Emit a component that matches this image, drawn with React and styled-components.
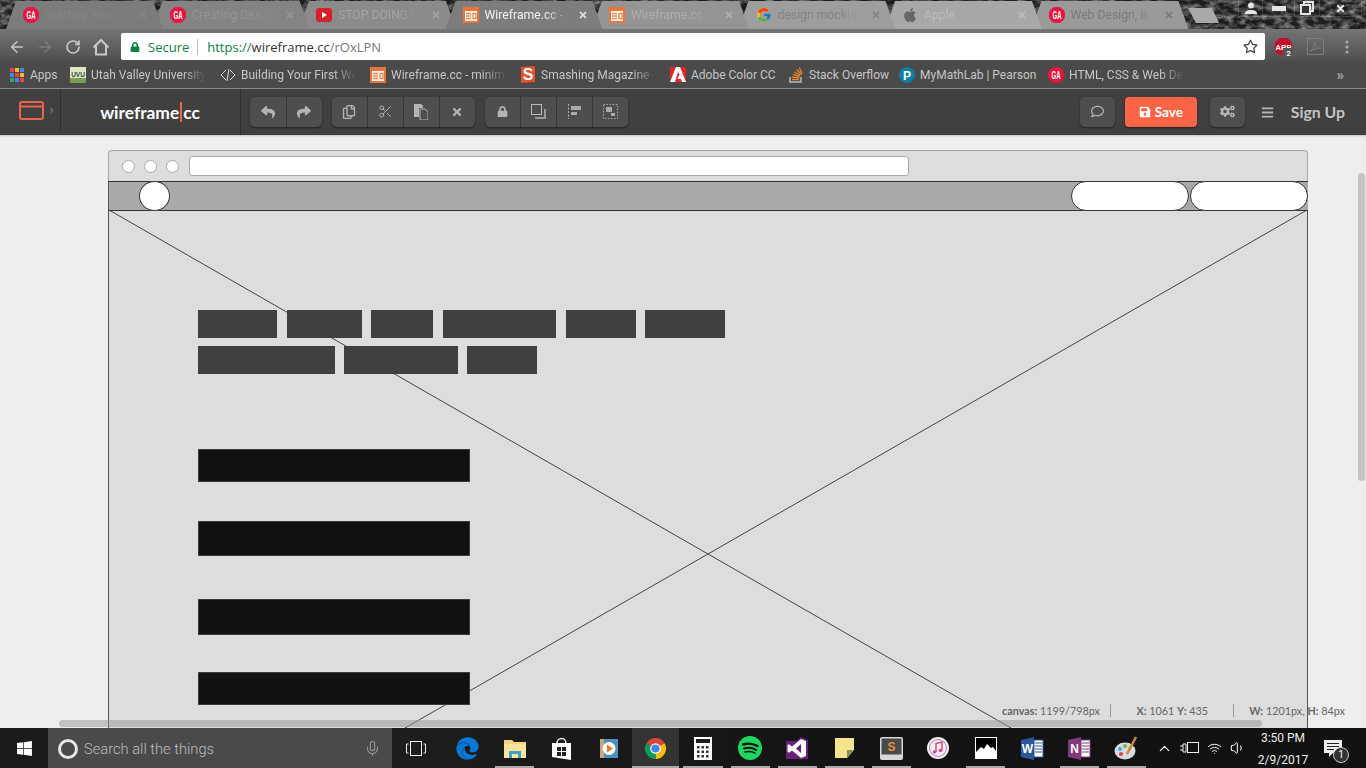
import React from "react";
import styled, { createGlobalStyle } from "styled-components";
import {
  FaApple, FaReply, FaShare, FaRegCopy, FaTimes, FaLock, FaRegComment,
  FaSave, FaCogs, FaBars, FaRegStar, FaEdge, FaWindows, FaCaretRight,
} from "react-icons/fa";
import { FcGoogle } from "react-icons/fc";
import { ArrowLeft, ArrowRight, RotateCw, Mic, ChevronUp, Wifi, Volume1, Scissors } from "lucide-react";

const uiFont = `Roboto, "Open Sans", sans-serif`;
const appFont = `Lato, "Open Sans", sans-serif`;

const GlobalStyle = createGlobalStyle`
  html, body { margin: 0; padding: 0; height: 100%; overflow: hidden; background: #eee; }
  * { box-sizing: border-box; }
`;

const Screen = styled.div`
  width: 1366px;
  height: 768px;
  display: flex;
  flex-direction: column;
  overflow: hidden;
  font-family: ${uiFont};
`;

/* --- browser tabs --- */
const TabStrip = styled.div`
  position: relative;
  height: 29px;
  flex: none;
  background: #1c1c1c;
  display: flex;
  padding: 1px 0 0 6px;
  overflow: hidden;
`;
const Noise = styled.svg`
  position: absolute;
  inset: 0;
  width: 100%;
  height: 100%;
`;
const Tab = styled.div`
  position: relative;
  z-index: ${({ $active, $z }) => ($active ? 20 : $z)};
  flex: none;
  width: 157px;
  height: 28px;
  margin-right: -10.5px;
  padding: 0 0 0 17px;
  display: flex;
  align-items: center;
  gap: 6px;
  background: ${({ $bg }) => $bg};
  clip-path: polygon(10px 0, 147px 0, 157px 100%, 0 100%);
  color: ${({ $text }) => $text};
  font-size: 12.2px;
  &:first-child { padding-left: 15px; }
`;
const TabIcon = styled.span`
  flex: none;
  width: 16px;
  height: 16px;
  display: flex;
  align-items: center;
  justify-content: center;
`;
const TabLabel = styled.span`
  width: 84px;
  white-space: nowrap;
  overflow: hidden;
  -webkit-mask-image: linear-gradient(to right, #000 70%, transparent);
  mask-image: linear-gradient(to right, #000 70%, transparent);
`;
const TabClose = styled.span`
  display: flex;
  color: ${({ $active }) => ($active ? "#ddd" : "inherit")};
  margin-left: 3px;
`;
const NewTab = styled.div`
  position: relative;
  z-index: 1;
  flex: none;
  width: 31px;
  height: 15px;
  margin: 7px 0 0 10px;
  background: #aaa;
  clip-path: polygon(0 0, 24px 0, 100% 100%, 8px 100%);
`;
const WindowControls = styled.div`
  position: absolute;
  z-index: 30;
  top: 0;
  right: 4px;
  height: 17px;
  display: flex;
  color: #e4e4e4;
  border: 1px solid rgba(255, 255, 255, 0.14);
  border-top: 0;
`;
const WindowButton = styled.div`
  width: ${({ $w }) => $w}px;
  display: flex;
  align-items: center;
  justify-content: center;
  border-left: ${({ $first }) => ($first ? "0" : "1px solid rgba(255,255,255,.14)")};
`;

/* --- chrome toolbar --- */
const Toolbar = styled.div`
  height: 33px;
  flex: none;
  display: flex;
  align-items: center;
  padding: 2px 0 0 3px;
  background: linear-gradient(#757575, #4e4e4e);
  color: #c8c8c8;
`;
const NavButton = styled.div`
  width: 28px;
  display: flex;
  justify-content: center;
  opacity: ${({ $dim }) => ($dim ? 0.25 : 1)};
`;
const Omnibox = styled.div`
  width: 1144px;
  height: 27px;
  margin-left: 6px;
  background: #fff;
  border-radius: 2px;
  display: flex;
  align-items: center;
  padding: 0 6px 0 9px;
  font-family: "Open Sans", sans-serif;
  font-size: 13px;
`;
const Secure = styled.span`
  color: #0b8043;
  display: flex;
  align-items: center;
  gap: 8px;
  padding-right: 8px;
  border-right: 1px solid #bbb;
  height: 16px;
  line-height: 16px;
`;
const UrlText = styled.span`
  color: ${({ $c }) => $c};
  margin-left: ${({ $first }) => ($first ? "9px" : "0")};
`;
const Star = styled.span`
  margin-left: auto;
  display: flex;
  color: #444;
  padding-right: 1px;
`;
const Extension = styled.div`
  position: relative;
  width: 32px;
  display: flex;
  justify-content: center;
  margin-left: ${({ $ml }) => $ml || 0}px;
`;
const Badge = styled.span`
  position: absolute;
  top: 11px;
  left: 16px;
  width: 11px;
  height: 11px;
  background: #555;
  color: #eee;
  font-size: 8px;
  font-weight: 700;
  line-height: 11px;
  text-align: center;
`;

/* --- bookmarks --- */
const Bookmarks = styled.div`
  height: 27px;
  flex: none;
  display: flex;
  align-items: center;
  background: #4a4a4a;
  padding: 0 0 1px 9px;
  font-size: 12px;
  color: #c6c6c6;
  border-bottom: 1px solid #8a8a8a;
`;
const Bookmark = styled.div`
  flex: none;
  width: ${({ $w }) => $w}px;
  display: flex;
  align-items: center;
  gap: 5px;
`;
const BookmarkIcon = styled.span`
  flex: none;
  width: 16px;
  height: 16px;
  display: flex;
  align-items: center;
  justify-content: center;
`;
const BookmarkLabel = styled.span`
  white-space: nowrap;
  overflow: hidden;
  flex: 1;
  margin-right: ${({ $fade }) => ($fade ? 14 : 2)}px;
  -webkit-mask-image: ${({ $fade }) => ($fade ? "linear-gradient(to right, #000 80%, transparent)" : "none")};
  mask-image: ${({ $fade }) => ($fade ? "linear-gradient(to right, #000 80%, transparent)" : "none")};
`;
const More = styled.span`
  margin-left: auto;
  margin-right: 22px;
  font-size: 15px;
  font-weight: 700;
  color: #aaa;
`;

/* --- wireframe.cc header --- */
const AppHeader = styled.header`
  height: 46px;
  flex: none;
  display: flex;
  align-items: center;
  background: #404040;
  font-family: ${appFont};
`;
const MenuCell = styled.div`
  width: 61px;
  height: 42px;
  align-self: flex-start;
  display: flex;
  align-items: center;
  padding-left: 19px;
  gap: 3px;
  color: #666;
  border-right: 1px solid #2e2e2e;
`;
const Logo = styled.div`
  width: 180px;
  height: 100%;
  display: flex;
  align-items: center;
  justify-content: center;
  padding-right: 1px;
  color: #fff;
  font-weight: 700;
  font-size: 17.4px;
  border-right: 1px solid #2e2e2e;
  margin-right: 9px;
`;
const LogoPipe = styled.span`
  width: 2px;
  height: 20px;
  margin: 0 1px;
  background: #e8644a;
`;
const Group = styled.div`
  display: flex;
  height: 30px;
  margin-right: 10px;
  margin-top: -1px;
  border-radius: 5px;
  background: #4e4e4e;
  box-shadow: 0 1px 2px #222;
`;
const ToolButton = styled.button`
  width: 35.75px;
  padding: 0;
  height: 100%;
  display: flex;
  align-items: center;
  justify-content: center;
  border: 0;
  border-left: ${({ $first }) => ($first ? "0" : "1px solid #363636")};
  background: none;
  color: #b4b4b4;
`;
const Right = styled.div`
  margin-left: auto;
  display: flex;
  align-items: center;
  padding-right: 21px;
`;
const SoloButton = styled(Group)`
  margin: -1px 0 0;
  width: 35px;
  justify-content: center;
  align-items: center;
  color: #b4b4b4;
`;
const SaveButton = styled.button`
  width: 72px;
  height: 30px;
  margin: -1px 13px 0 10px;
  border: 0;
  padding: 0;
  border-radius: 4px;
  background: #fb6446;
  color: #fff;
  font: 700 13.5px ${appFont};
  display: flex;
  align-items: center;
  justify-content: center;
  gap: 4px;
  box-shadow: 0 1px 2px #222;
`;
const SignUp = styled.span`
  margin: -1px 0 0 17px;
  color: #c4c4c4;
  font-weight: 700;
  font-size: 15.8px;
`;
const Hamburger = styled.span`
  display: flex;
  margin-left: 16px;
  color: #b4b4b4;
`;

/* --- canvas with the wireframe --- */
const Workspace = styled.main`
  position: relative;
  flex: 1;
  min-height: 0;
  overflow: hidden;
  background: #eee;
  box-shadow: inset 0 2px 2px -1px rgba(0, 0, 0, 0.18);
  padding: 15px 0 0 108px;
`;
const MockBrowser = styled.div`
  width: 1200px;
`;
const MockChrome = styled.div`
  height: 31px;
  display: flex;
  align-items: center;
  gap: 9px;
  padding: 0 0 0 13px;
  background: #ddd;
  border: 1px solid #aaa;
  border-bottom: 0;
  border-radius: 4px 4px 0 0;
`;
const Dot = styled.span`
  width: 13px;
  height: 13px;
  border-radius: 50%;
  background: #fff;
  border: 1px solid #aaa;
`;
const MockUrl = styled.div`
  width: 720px;
  height: 20px;
  margin-left: 1px;
  background: #fff;
  border: 1px solid #aaa;
  border-radius: 3px;
`;
const MockNav = styled.div`
  position: relative;
  z-index: 1;
  height: 30px;
  display: flex;
  justify-content: space-between;
  background: #a9a9a9;
  border-top: 1px solid #333;
  border-bottom: 1px solid #333;
  border-left: 1px solid #555;
  padding-left: 30px;
`;
const NavCircle = styled.span`
  width: 31px;
  height: 30px;
  margin-top: -1px;
  border-radius: 50%;
  background: #fff;
  border: 1px solid #333;
`;
const Pills = styled.div`
  display: flex;
  gap: 1px;
  margin-top: -1px;
`;
const Pill = styled.span`
  width: 118px;
  height: 30px;
  border-radius: 15px;
  background: #fff;
  border: 1px solid #333;
`;
const MockBody = styled.div`
  position: relative;
  height: 688px;
  margin-top: -1px;
  padding: 100px 0 0 89px;
  background: #ddd;
  border-left: 1px solid #555;
  border-right: 1px solid #555;
`;
const Cross = styled.svg`
  position: absolute;
  inset: 0;
  width: 100%;
  height: 100%;
`;
const WordRow = styled.div`
  position: relative;
  display: flex;
  gap: ${({ $gap }) => $gap}px;
  margin-bottom: 8px;
`;
const Word = styled.span`
  width: ${({ $w }) => $w}px;
  height: 28px;
  background: #404040;
`;
const Bar = styled.div`
  position: relative;
  width: 272px;
  height: ${({ $h }) => $h}px;
  margin-top: ${({ $mt }) => $mt}px;
  background: #111;
  border: 1px solid #3a3a3a;
`;
const Status = styled.div`
  position: absolute;
  right: 21px;
  bottom: 11px;
  display: flex;
  font: 10.8px ${appFont};
  color: #666;
`;
const StatusCell = styled.span`
  width: ${({ $w }) => $w}px;
  white-space: nowrap;
  text-align: right;
  padding-right: ${({ $pr }) => $pr || 0}px;
  border-right: ${({ $last }) => ($last ? "0" : "1px solid #999")};
  b { font-weight: 700; }
`;
const ScrollH = styled.div`
  position: absolute;
  left: 59px;
  bottom: 1px;
  width: 1203px;
  height: 7px;
  border-radius: 4px;
  background: rgba(150, 150, 150, 0.5);
`;
const ScrollV = styled.div`
  position: absolute;
  right: 1px;
  top: 38px;
  width: 7px;
  height: 308px;
  border-radius: 4px;
  background: #c4c4c4;
`;

/* --- windows taskbar --- */
const Taskbar = styled.footer`
  height: 40px;
  flex: none;
  display: flex;
  align-items: stretch;
  background: linear-gradient(to right, #262626, #141414 60%, #111);
  color: #fff;
`;
const StartButton = styled.div`
  width: 48px;
  display: flex;
  align-items: center;
  justify-content: center;
  background: #1a1a1a;
`;
const SearchBox = styled.div`
  width: 344px;
  display: flex;
  align-items: center;
  background: #4a4a4a;
  padding: 1px 11px 0 10px;
  color: #bdbdbd;
  font-size: 14.7px;
  font-weight: 300;
`;
const Cortana = styled.span`
  width: 20px;
  height: 20px;
  border: 3px solid #e6e6e6;
  border-radius: 50%;
  margin-right: 6px;
`;
const SearchMic = styled.span`
  margin-left: auto;
  display: flex;
  color: #999;
`;
const TaskViewCell = styled.div`
  flex: none;
  width: 52px;
  padding-right: 4px;
  display: flex;
  align-items: center;
  justify-content: center;
`;
const TaskItem = styled.div`
  position: relative;
  flex: none;
  width: 47.1px;
  display: flex;
  align-items: center;
  justify-content: center;
  background: ${({ $active }) => ($active ? "#333" : "transparent")};
  &::after {
    content: "";
    display: ${({ $running }) => ($running ? "block" : "none")};
    position: absolute;
    left: ${({ $active }) => ($active ? 0 : 4)}px;
    right: ${({ $active }) => ($active ? 0 : 4)}px;
    bottom: 0;
    height: 2px;
    background: #aaa;
  }
`;
const Tray = styled.div`
  margin-left: auto;
  display: flex;
  align-items: center;
`;
const TrayIcon = styled.span`
  width: ${({ $w }) => $w}px;
  display: flex;
  justify-content: center;
`;
const Clock = styled.div`
  width: 66px;
  margin-left: 1px;
  padding-top: 1px;
  text-align: center;
  font-size: 12px;
  line-height: 22px;
  color: #eee;
`;
const Notify = styled.div`
  position: relative;
  width: 50px;
  padding-right: 16px;
  display: flex;
  justify-content: center;
`;
const NotifyBadge = styled.span`
  position: absolute;
  left: 17px;
  top: 7px;
  width: 16px;
  height: 16px;
  border-radius: 50%;
  background: #333;
  border: 1px solid #ccc;
  font-size: 10px;
  line-height: 14px;
  text-align: center;
`;

/* --- little drawings --- */
const Ga = ({ size = 16 }) => (
  <svg width={size} height={size} viewBox="0 0 16 16">
    <circle cx="8" cy="8" r="8" fill="#e4173e" stroke="#e4173e" strokeDasharray="1.5 1" />
    <text x="8" y="12" textAnchor="middle" fontSize="11" fontWeight="700" fontFamily="Liberation Sans" fill="#fff" textLength="9" lengthAdjust="spacingAndGlyphs">GA</text>
  </svg>
);
const Wf = ({ size = 16 }) => (
  <svg width={size} height={size} viewBox="0 0 16 16">
    <rect x="1" y="1" width="14" height="14" fill="#f7efe8" stroke="#e8763a" strokeWidth="2" />
    <rect x="1" y="1" width="14" height="3" fill="#e8763a" />
    <path d="M3 6.500h5M3 9h5M3 11.500h5M10 6.500h3v5h-3z" stroke="#e8905a" strokeWidth="1.300" fill="none" />
  </svg>
);
const Yt = () => (
  <svg width="16" height="14" viewBox="0 0 16 14">
    <rect width="16" height="14" rx="3" fill="#d42027" />
    <path d="M6 4l5 3-5 3z" fill="#fff" />
  </svg>
);
const AppsGrid = () => (
  <svg width="14" height="14" viewBox="0 0 14 14">
    {["#e8453c", "#f9bb2d", "#4285f4", "#4285f4", "#e8453c", "#f9bb2d", "#34a853", "#4285f4", "#e8453c"].map((c, i) => (
      <rect key={i} x={(i % 3) * 5} y={Math.floor(i / 3) * 5} width="4" height="4" fill={c} />
    ))}
  </svg>
);
const Uvu = () => (
  <svg width="16" height="16" viewBox="0 0 16 16">
    <rect width="16" height="16" fill="#dfe5c8" />
    <rect y="11" width="16" height="5" fill="#7f9a55" />
    <text x="8" y="10" textAnchor="middle" fontSize="6.500" fontWeight="700" fontFamily="Liberation Sans" fill="#26512e">UVU</text>
  </svg>
);
const CodeDiamond = () => (
  <svg width="16" height="16" viewBox="0 0 16 16" fill="none" stroke="#ddd" strokeWidth="1">
    <path d="M6 3L1 8l5 5M10 3l5 5-5 5M9 2L7 14" />
  </svg>
);
const Smashing = () => (
  <svg width="16" height="17" viewBox="0 0 16 17">
    <path d="M1 1l14-1v16L1 17z" fill="#e8502a" />
    <text x="8" y="14" textAnchor="middle" fontSize="16" fontWeight="700" fontFamily="Liberation Sans" fill="#fff">S</text>
  </svg>
);
const Adobe = () => (
  <svg width="16" height="15" viewBox="0 0 16 15">
    <rect width="16" height="15" fill="#e8232a" />
    <path d="M6 0h4l6 15h-4l-1-3H7.500l2-4.500L8 5l-3 10H0z" fill="#fff" />
  </svg>
);
const StackOverflow = () => (
  <svg width="16" height="17" viewBox="0 0 16 17" fill="none">
    <path d="M2 11v5h11v-5" stroke="#bbb" strokeWidth="1.500" />
    <path d="M4 13.500h7M4.200 11l7 .8M5 8.400l6.600 2M6.400 6l6 3.400M8.600 3.600l4.800 5M11.200 1.600l3 6" stroke="#e0812a" strokeWidth="1.400" />
  </svg>
);
const Pearson = () => (
  <svg width="16" height="16" viewBox="0 0 16 16">
    <circle cx="8" cy="8" r="8" fill="#0f7ea3" />
    <text x="8" y="12.500" textAnchor="middle" fontSize="12" fontWeight="700" fontFamily="Liberation Sans" fill="#fff">P</text>
  </svg>
);
const Abp = () => (
  <svg width="19" height="19" viewBox="0 0 19 19">
    <path d="M5.500 1h8l4.500 4.500v8L13.500 18h-8L1 13.500v-8z" fill="#c70d2c" />
    <text x="9.500" y="12.500" textAnchor="middle" fontSize="7.500" fontWeight="700" fontFamily="Liberation Sans" fill="#fff">ABP</text>
  </svg>
);
const Pdf = () => (
  <svg width="17" height="17" viewBox="0 0 17 17" fill="none" stroke="#7c7c7c">
    <rect x=".5" y=".5" width="16" height="16" />
    <path d="M3 13c3-1 5-6 5-9 0 3 2 6 6 6-3 0-7 1-11 3z" />
  </svg>
);
const Dots = () => (
  <svg width="4" height="14" viewBox="0 0 4 14" fill="#aaa">
    <circle cx="2" cy="2" r="1.600" /><circle cx="2" cy="7" r="1.600" /><circle cx="2" cy="12" r="1.600" />
  </svg>
);
const HomeOutline = () => (
  <svg width="18" height="18" viewBox="0 0 18 18" fill="none" stroke="#c8c8c8" strokeWidth="2">
    <path d="M1.500 9.500L9 2l7.500 7.500M4 8v8.500h10V8" />
  </svg>
);
const LogoWindow = () => (
  <svg width="25" height="19" viewBox="0 0 25 19" fill="none" stroke="#e8644a" strokeWidth="2">
    <rect x="1" y="1" width="23" height="17" rx="2" />
    <path d="M1 5.500h23" />
  </svg>
);
const PasteIcon = () => (
  <svg width="14" height="16" viewBox="0 0 14 16">
    <path d="M0 0h7l2 2v2H5v9H0z" fill="#b4b4b4" />
    <path d="M6 5h5l3 3v8H6z" fill="#4e4e4e" stroke="#b4b4b4" />
  </svg>
);
const LayersIcon = () => (
  <svg width="15" height="15" viewBox="0 0 15 15" fill="none">
    <path d="M4 15h11V5h-2v8H4z" fill="#999" />
    <rect x=".5" y=".5" width="10" height="10" stroke="#bbb" />
  </svg>
);
const AlignIcon = () => (
  <svg width="13" height="15" viewBox="0 0 13 15">
    <path d="M.5 0v15" stroke="#aaa" strokeDasharray="2 1.500" />
    <path d="M3 2h10v4H3zM3 8h6v3H3z" fill="#aaa" />
  </svg>
);
const GroupIcon = () => (
  <svg width="15" height="15" viewBox="0 0 15 15" fill="none">
    <rect x=".5" y=".5" width="14" height="14" stroke="#aaa" strokeDasharray="1.500 1.500" />
    <path d="M3 3h6v5H3zM8 9h4v3H8z" fill="#aaa" />
  </svg>
);
const TaskView = () => (
  <svg width="20" height="15" viewBox="0 0 20 15" fill="none" stroke="#eee" strokeWidth="1">
    <rect x="4.500" y=".5" width="11" height="14" />
    <path d="M2.500 3H.5v9h2M17.500 3h2v9h-2" />
  </svg>
);
const Explorer = () => (
  <svg width="22" height="20" viewBox="0 0 22 20">
    <path d="M0 2h8l2 2h12v16H0z" fill="#f3d679" />
    <path d="M0 6h22v14H0z" fill="#fae39a" />
    <path d="M5 20v-7h12v7h-3v-4H8v4z" fill="#3fa0c8" />
  </svg>
);
const Store = () => (
  <svg width="21" height="23" viewBox="0 0 21 23">
    <path d="M6 6a4.500 4.500 0 0 1 9 0" fill="none" stroke="#eee" strokeWidth="1.400" />
    <path d="M1 6h19v17L1 20z" fill="#fff" />
    <path d="M6 10h4v4H6zM11 10h4v4h-4zM6 15h4v4H6zM11 15h4v4h-4z" fill="#222" />
  </svg>
);
const Wmp = () => (
  <svg width="20" height="21" viewBox="0 0 20 21">
    <path d="M1 1h18v19H1z" fill="#4e91c0" />
    <path d="M1 1h4v19H1z" fill="#c9a77a" />
    <circle cx="10" cy="10.500" r="6.500" fill="#fff" />
    <path d="M8 6.500l6 4-6 4z" fill="#ee7a1f" />
  </svg>
);
const ChromeIcon = () => (
  <svg width="23" height="23" viewBox="0 0 24 24">
    <path d="M12 12L2.470 6.500A11 11 0 0 1 21.530 6.500z" fill="#db4437" />
    <path d="M12 12l9.530-5.500A11 11 0 0 1 12 23z" fill="#f4c20d" />
    <path d="M12 12v11A11 11 0 0 1 2.470 6.500z" fill="#0f9d58" />
    <circle cx="12" cy="12" r="5.500" fill="#fff" />
    <circle cx="12" cy="12" r="4.300" fill="#4285f4" />
  </svg>
);
const Calc = () => (
  <svg width="18" height="23" viewBox="0 0 18 23">
    <rect width="18" height="23" fill="#fff" />
    <rect x="2" y="2" width="14" height="4" fill="#1c1c1c" />
    {[0, 1, 2, 3, 4, 5, 6, 7, 8].map((i) => (
      <rect key={i} x={3 + (i % 3) * 4.5} y={9 + Math.floor(i / 3) * 4.5} width="2.500" height="2.500" fill="#333" />
    ))}
  </svg>
);
const Spotify = () => (
  <svg width="24" height="24" viewBox="0 0 24 24" fill="none" stroke="#111" strokeLinecap="round">
    <circle cx="12" cy="12" r="12" fill="#1ed760" stroke="none" />
    <path d="M5 8.500c5-1.500 10-1 14.500 1.500" strokeWidth="2.400" />
    <path d="M6 12.500c4-1 8.500-.8 12 1.300" strokeWidth="2" />
    <path d="M7 16c3.500-.8 7-.5 10 1" strokeWidth="1.600" />
  </svg>
);
const VisualStudio = () => (
  <svg width="22" height="23" viewBox="0 0 22 23">
    <path d="M0 4h22v18H0z" fill="#68217a" />
    <path d="M15 0l7 3v17l-7 3-9-8-4 3-2-1V6l2-1 4 3z" fill="#68217a" />
    <path d="M15 2l5 2v15l-5 2-9-7.500-3 2.200L1.500 15V8l1.500-.8 3 2.300zM15 7l-5 4.500 5 4.500z" fill="#fff" fillRule="evenodd" />
  </svg>
);
const Sticky = () => (
  <svg width="19" height="20" viewBox="0 0 19 20">
    <path d="M0 0h19v12l-7 8H0z" fill="#f4e48d" />
    <path d="M19 12h-7v8z" fill="#8f8a60" />
  </svg>
);
const Sublime = () => (
  <svg width="23" height="23" viewBox="0 0 23 23">
    <rect width="23" height="23" rx="2" fill="#d8d8d8" />
    <rect x="1.500" y="1.500" width="20" height="16" fill="#4a4a4a" />
    <text x="11.500" y="14" textAnchor="middle" fontSize="12" fontWeight="700" fontFamily="Liberation Sans" fill="#e8913a">S</text>
  </svg>
);
const Itunes = () => (
  <svg width="22" height="22" viewBox="0 0 22 22">
    <circle cx="11" cy="11" r="11" fill="#f5f0f0" />
    <circle cx="11" cy="11" r="8.500" fill="none" stroke="#b27fd0" strokeWidth="1" />
    <path d="M9 15V6.500l6-1.500v8.500" fill="none" stroke="#e4477c" strokeWidth="1.500" />
    <circle cx="7.500" cy="15" r="1.800" fill="#c34fa8" />
    <circle cx="13.500" cy="13.500" r="1.800" fill="#e4477c" />
  </svg>
);
const Photos = () => (
  <svg width="22" height="22" viewBox="0 0 22 22">
    <rect x=".5" y=".5" width="21" height="21" fill="#000" stroke="#fff" />
    <path d="M1 15l5-5 3 2 3-5 4 4 2-1 3 4v7.500H1z" fill="#fff" />
  </svg>
);
const Office = ({ letter, c }) => (
  <svg width="23" height="23" viewBox="0 0 23 23">
    <path d="M0 3l13-3v23L0 20z" fill={c} />
    <rect x="13" y="3" width="9" height="17" fill="#fff" stroke={c} strokeWidth="1" />
    <path d="M14 6h7M14 9h7M14 12h7M14 15h7" stroke={c} strokeWidth="1.200" />
    <text x="6.500" y="16" textAnchor="middle" fontSize="12" fontWeight="700" fontFamily="Liberation Sans" fill="#fff">{letter}</text>
  </svg>
);
const Paint = () => (
  <svg width="25" height="25" viewBox="0 0 25 25">
    <ellipse cx="11" cy="15" rx="10.500" ry="8.500" fill="#d8dce0" />
    <circle cx="6" cy="13" r="2" fill="#4ca6d8" />
    <circle cx="11" cy="10" r="2" fill="#6cbf4b" />
    <circle cx="16" cy="12" r="2" fill="#e8b93a" />
    <circle cx="7" cy="18" r="2" fill="#d8463a" />
    <path d="M13 18L22 1" stroke="#c98a3c" strokeWidth="2.500" />
  </svg>
);
const Plug = () => (
  <svg width="20" height="14" viewBox="0 0 20 14" fill="none" stroke="#eee">
    <rect x="7.500" y="1.500" width="11" height="10" />
    <path d="M0 5h3M0 9h3M3 3h3v8H3z" />
  </svg>
);
const ActionCenter = () => (
  <svg width="18" height="17" viewBox="0 0 18 17">
    <path d="M0 0h18v13h-9l-4 4v-4H0z" fill="#eee" />
    <path d="M3 3.500h12M3 6.500h12M3 9.500h7" stroke="#222" />
  </svg>
);
const UserGlyph = () => (
  <svg width="12" height="12" viewBox="0 0 12 12" fill="#e4e4e4">
    <circle cx="6" cy="3.500" r="3" />
    <path d="M0 12c0-3 2-4 6-4s6 1 6 4z" />
  </svg>
);
const Minimize = () => (
  <svg width="14" height="5" viewBox="0 0 14 5"><rect width="14" height="5" fill="#e4e4e4" /></svg>
);
const Restore = () => (
  <svg width="14" height="14" viewBox="0 0 14 14" fill="none" stroke="#e4e4e4" strokeWidth="2">
    <rect x="4" y="1" width="9" height="9" />
    <rect x="1" y="4" width="9" height="9" fill="#333" />
  </svg>
);

/* --- content --- */
const tabs = [
  { icon: <Ga />, label: "Starting Your", bg: "#7c7c7c", text: "#858585" },
  { icon: <Ga />, label: "Creating Desig", bg: "#848484", text: "#949494" },
  { icon: <Yt />, label: "STOP DOING C", bg: "#8b8b8b", text: "#a4a4a4" },
  { icon: <Wf />, label: "Wireframe.cc - r", bg: "#7d7d7d", text: "#f2f2f2", active: true },
  { icon: <Wf />, label: "Wireframe.cc -", bg: "#959595", text: "#aeaeae" },
  { icon: <FcGoogle size={16} />, label: "design mockup", bg: "#9e9e9e", text: "#848484" },
  { icon: <FaApple size={16} color="#666" />, label: "Apple", bg: "#a8a8a8", text: "#bcbcbc" },
  { icon: <Ga />, label: "Web Design, B", bg: "#9a9a9a", text: "#7a7a7a" },
];

const bookmarks = [
  { icon: <AppsGrid />, label: "Apps", w: 61 },
  { icon: <Uvu />, label: "Utah Valley University", w: 150, fade: true },
  { icon: <CodeDiamond />, label: "Building Your First We", w: 150, fade: true },
  { icon: <Wf />, label: "Wireframe.cc - minim", w: 150, fade: true },
  { icon: <Smashing />, label: "Smashing Magazine -", w: 150, fade: true },
  { icon: <Adobe />, label: "Adobe Color CC", w: 118 },
  { icon: <StackOverflow />, label: "Stack Overflow", w: 111 },
  { icon: <Pearson />, label: "MyMathLab | Pearson", w: 149 },
  { icon: <Ga />, label: "HTML, CSS & Web De", w: 150, fade: true },
];

const toolGroups = [
  [<FaReply size={14} />, <FaShare size={14} />],
  [<FaRegCopy size={14} />, <Scissors size={15} strokeWidth={1.5} />, <PasteIcon />, <FaTimes size={12} />],
  [<FaLock size={11} />, <LayersIcon />, <AlignIcon />, <GroupIcon />],
];

const firstRow = [79, 75, 62, 113, 70, 80];
const secondRow = [137, 114, 70];
const bars = [
  { h: 33, mt: 75 },
  { h: 35, mt: 39 },
  { h: 36, mt: 43 },
  { h: 33, mt: 37 },
];

const taskApps = [
  { icon: <FaEdge size={23} color="#0a78d7" /> },
  { icon: <Explorer />, running: true },
  { icon: <Store /> },
  { icon: <Wmp /> },
  { icon: <ChromeIcon />, running: true, active: true },
  { icon: <Calc />, running: true },
  { icon: <Spotify />, running: true },
  { icon: <VisualStudio />, running: true },
  { icon: <Sticky />, running: true },
  { icon: <Sublime />, running: true },
  { icon: <Itunes /> },
  { icon: <Photos />, running: true },
  { icon: <Office letter="W" c="#2b579a" /> },
  { icon: <Office letter="N" c="#80397b" />, running: true },
  { icon: <Paint />, running: true },
];

export default function App() {
  return (
    <Screen>
      <GlobalStyle />

      <TabStrip>
        <Noise>
          <defs>
            <filter id="marble">
              <feTurbulence type="fractalNoise" baseFrequency="0.12 0.2" numOctaves="4" seed="7" />
              <feColorMatrix values="0 0 0 0 .5  0 0 0 0 .5  0 0 0 0 .5  1.400 0 0 0 -.5" />
            </filter>
          </defs>
          <rect width="100%" height="100%" filter="url(#marble)" />
        </Noise>
        {tabs.map((t, i) => (
          <Tab key={i} $active={t.active} $bg={t.bg} $text={t.text} $z={10 - i}>
            <TabIcon>{t.icon}</TabIcon>
            <TabLabel>{t.label}</TabLabel>
            <TabClose $active={t.active}><FaTimes size={10} /></TabClose>
          </Tab>
        ))}
        <NewTab />
        <WindowControls>
          <WindowButton $w={23} $first><UserGlyph /></WindowButton>
          <WindowButton $w={32}><Minimize /></WindowButton>
          <WindowButton $w={25}><Restore /></WindowButton>
          <WindowButton $w={42}><FaTimes size={11} /></WindowButton>
        </WindowControls>
      </TabStrip>

      <Toolbar>
        <NavButton><ArrowLeft size={18} /></NavButton>
        <NavButton $dim><ArrowRight size={18} /></NavButton>
        <NavButton><RotateCw size={16} strokeWidth={2.5} /></NavButton>
        <NavButton><HomeOutline /></NavButton>
        <Omnibox>
          <Secure><FaLock size={10} />Secure</Secure>
          <UrlText $c="#0b8043" $first>https://</UrlText>
          <UrlText $c="#333">wireframe.cc</UrlText>
          <UrlText $c="#777">/rOxLPN</UrlText>
          <Star><FaRegStar size={15} /></Star>
        </Omnibox>
        <Extension $ml={2}><Abp /><Badge>2</Badge></Extension>
        <Extension><Pdf /></Extension>
        <Extension><Dots /></Extension>
      </Toolbar>

      <Bookmarks>
        {bookmarks.map((b) => (
          <Bookmark key={b.label} $w={b.w}>
            <BookmarkIcon>{b.icon}</BookmarkIcon>
            <BookmarkLabel $fade={b.fade}>{b.label}</BookmarkLabel>
          </Bookmark>
        ))}
        <More>»</More>
      </Bookmarks>

      <AppHeader>
        <MenuCell>
          <LogoWindow />
          <FaCaretRight size={11} />
        </MenuCell>
        <Logo>wireframe<LogoPipe />cc</Logo>
        {toolGroups.map((group, g) => (
          <Group key={g}>
            {group.map((icon, i) => (
              <ToolButton key={i} $first={i === 0}>{icon}</ToolButton>
            ))}
          </Group>
        ))}
        <Right>
          <SoloButton><FaRegComment size={13} /></SoloButton>
          <SaveButton><FaSave size={12} />Save</SaveButton>
          <SoloButton><FaCogs size={15} /></SoloButton>
          <Hamburger><FaBars size={13} /></Hamburger>
          <SignUp>Sign Up</SignUp>
        </Right>
      </AppHeader>

      <Workspace>
        <MockBrowser>
          <MockChrome>
            <Dot /><Dot /><Dot />
            <MockUrl />
          </MockChrome>
          <MockNav>
            <NavCircle />
            <Pills><Pill /><Pill /></Pills>
          </MockNav>
          <MockBody>
            <Cross viewBox="0 0 1198 688" preserveAspectRatio="none">
              <path d="M0 0L1198 688M1198 0L0 688" stroke="#444" strokeWidth="1" fill="none" />
            </Cross>
            <WordRow $gap={9.7}>{firstRow.map((w, i) => <Word key={i} $w={w} />)}</WordRow>
            <WordRow $gap={9}>{secondRow.map((w, i) => <Word key={i} $w={w} />)}</WordRow>
            {bars.map((b, i) => <Bar key={i} $h={b.h} $mt={b.mt} />)}
          </MockBody>
        </MockBrowser>
        <ScrollH />
        <ScrollV />
        <Status>
          <StatusCell $w={109} $pr={11}><b>canvas:</b> 1199/798px</StatusCell>
          <StatusCell $w={123} $pr={25}><b>X:</b> 1061 <b>Y:</b> 435</StatusCell>
          <StatusCell $w={111} $last><b>W:</b> 1201px, <b>H:</b> 84px</StatusCell>
        </Status>
      </Workspace>

      <Taskbar>
        <StartButton><FaWindows size={17} /></StartButton>
        <SearchBox>
          <Cortana />
          Search all the things
          <SearchMic><Mic size={17} strokeWidth={1.5} /></SearchMic>
        </SearchBox>
        <TaskViewCell><TaskView /></TaskViewCell>
        {taskApps.map((app, i) => (
          <TaskItem key={i} $running={app.running} $active={app.active}>{app.icon}</TaskItem>
        ))}
        <Tray>
          <TrayIcon $w={25}><ChevronUp size={17} strokeWidth={1.5} /></TrayIcon>
          <TrayIcon $w={25}><Plug /></TrayIcon>
          <TrayIcon $w={25}><Wifi size={15} strokeWidth={1.5} /></TrayIcon>
          <TrayIcon $w={22}><Volume1 size={16} strokeWidth={1.5} /></TrayIcon>
          <Clock>3:50 PM<br />2/9/2017</Clock>
          <Notify><ActionCenter /><NotifyBadge>1</NotifyBadge></Notify>
        </Tray>
      </Taskbar>
    </Screen>
  );
}
